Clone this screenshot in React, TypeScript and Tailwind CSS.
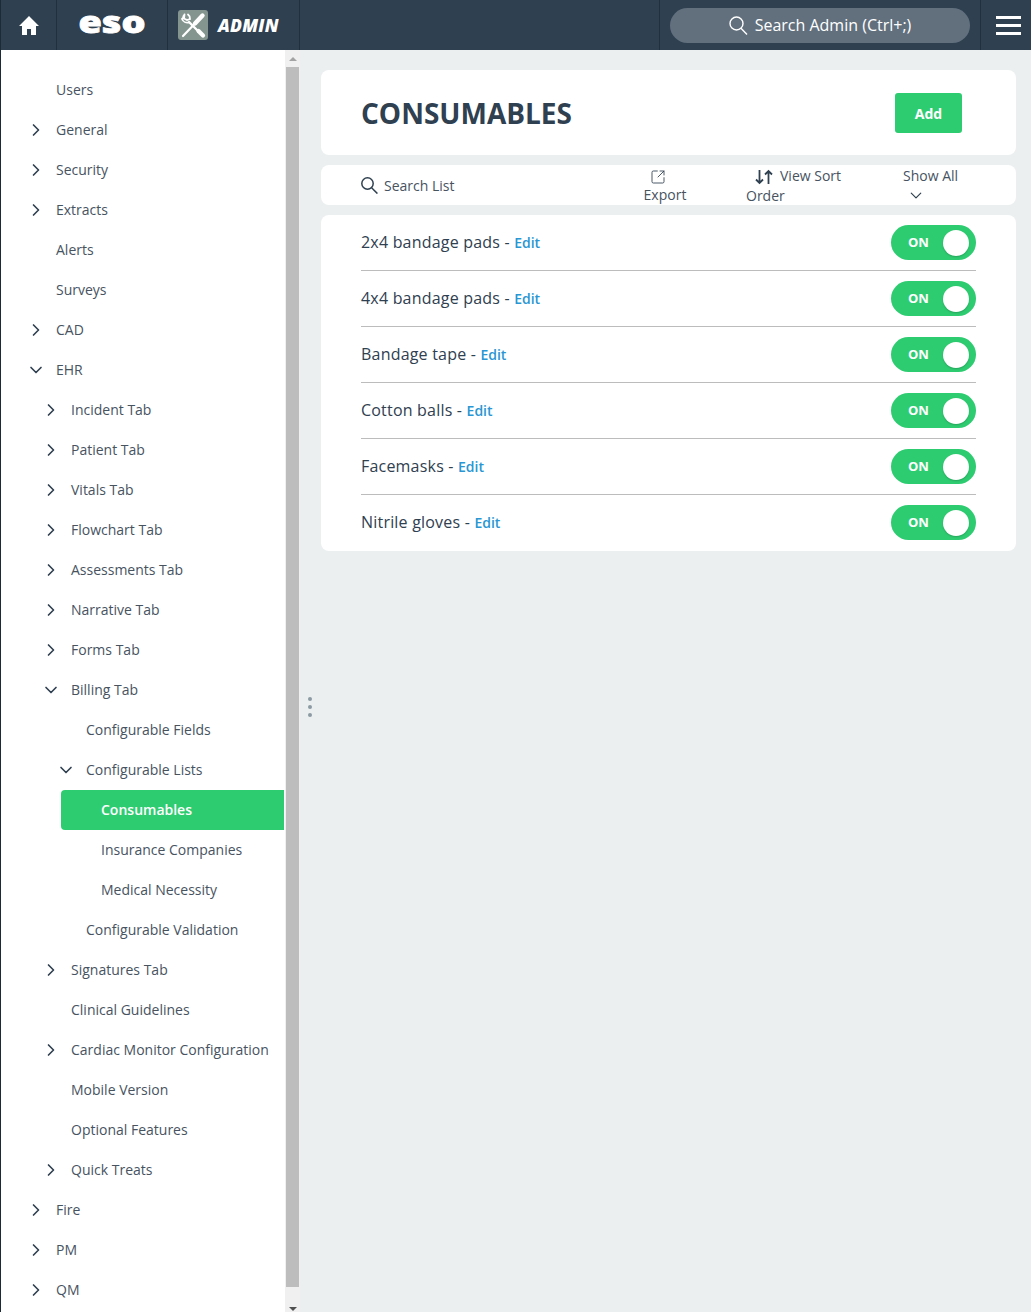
import React from "react";
import { ChevronRight, ChevronDown, SquareArrowOutUpRight } from "lucide-react";

type Row = { t: string; l: number; c?: "r" | "d"; a?: boolean };
const rows: Row[] = [
  { t: "Users", l: 0 },
  { t: "General", l: 0, c: "r" },
  { t: "Security", l: 0, c: "r" },
  { t: "Extracts", l: 0, c: "r" },
  { t: "Alerts", l: 0 },
  { t: "Surveys", l: 0 },
  { t: "CAD", l: 0, c: "r" },
  { t: "EHR", l: 0, c: "d" },
  { t: "Incident Tab", l: 1, c: "r" },
  { t: "Patient Tab", l: 1, c: "r" },
  { t: "Vitals Tab", l: 1, c: "r" },
  { t: "Flowchart Tab", l: 1, c: "r" },
  { t: "Assessments Tab", l: 1, c: "r" },
  { t: "Narrative Tab", l: 1, c: "r" },
  { t: "Forms Tab", l: 1, c: "r" },
  { t: "Billing Tab", l: 1, c: "d" },
  { t: "Configurable Fields", l: 2 },
  { t: "Configurable Lists", l: 2, c: "d" },
  { t: "Consumables", l: 3, a: true },
  { t: "Insurance Companies", l: 3 },
  { t: "Medical Necessity", l: 3 },
  { t: "Configurable Validation", l: 2 },
  { t: "Signatures Tab", l: 1, c: "r" },
  { t: "Clinical Guidelines", l: 1 },
  { t: "Cardiac Monitor Configuration", l: 1, c: "r" },
  { t: "Mobile Version", l: 1 },
  { t: "Optional Features", l: 1 },
  { t: "Quick Treats", l: 1, c: "r" },
  { t: "Fire", l: 0, c: "r" },
  { t: "PM", l: 0, c: "r" },
  { t: "QM", l: 0, c: "r" },
];
const items = ["2x4 bandage pads", "4x4 bandage pads", "Bandage tape", "Cotton balls", "Facemasks", "Nitrile gloves"];
const pad = ["pl-[55px]", "pl-[70px]", "pl-[85px]", "pl-[100px]"];
const chevLeft = ["left-[25px]", "left-[40px]", "left-[55px]", "left-[70px]"];

function NavRow({ r }: { r: Row }) {
  return (
    <div className={`relative h-10 flex items-center text-[14px] pb-[1px] ${pad[r.l]} ${r.a ? "" : "text-[#47535f]"}`}>
      {r.a && <div className="absolute left-[60px] right-[1px] top-0 bottom-0 bg-[#2ecc71] rounded-l-[4px]" />}
      {r.c === "r" && <ChevronRight className={`absolute ${chevLeft[r.l]} top-[10px] text-[#2f3f50]`} size={20} strokeWidth={2} />}
      {r.c === "d" && <ChevronDown className={`absolute ${chevLeft[r.l]} top-[10px] text-[#2f3f50]`} size={20} strokeWidth={2} />}
      <span className={r.a ? "relative font-semibold text-white" : "relative"}>{r.t}</span>
    </div>
  );
}

function Cell({ className, children }: { className: string; children: React.ReactNode }) {
  return <div className={`h-[50px] flex items-center justify-center border-r border-[#22303e] ${className}`}>{children}</div>;
}

export default function App() {
  return (
    <div className="w-[1031px] h-[1312px] overflow-hidden flex flex-col bg-[#ebeff0] font-['Open_Sans',sans-serif]">
      <header className="h-[50px] shrink-0 flex bg-[#2f4050] border-l border-[#1e2a36]">
        <Cell className="w-[56px]">
          <svg width="20" height="19" viewBox="0 0 20 19" fill="white" className="ml-[1px]">
            <path d="M10 0 L20 10 L17 10 L17 19 L12 19 L12 13 L8 13 L8 19 L3 19 L3 10 L0 10 Z" />
          </svg>
        </Cell>
        <Cell className="w-[111px]">
          <svg width="70" height="24" viewBox="0 0 70 24" fill="white" className="overflow-visible">
            <text x="35" y="20" textAnchor="middle" fontFamily="'Open Sans', sans-serif" fontWeight="800" fontSize="30" textLength="67" lengthAdjust="spacingAndGlyphs" stroke="white" strokeWidth="0.8">eso</text>
          </svg>
        </Cell>
        <Cell className="w-[132px] gap-[10px] justify-start">
          <div className="ml-[10px] w-[30px] h-[30px] rounded-[3px] bg-[#84958f]">
            <svg width="30" height="30" viewBox="0 0 30 30" fill="none" stroke="white" strokeLinecap="round">
              <path d="M24.5 5.5 L17 13.5" strokeWidth="4.4" />
              <path d="M17 13.5 L5 26" strokeWidth="2.2" />
              <path d="M11 12 L20 21" strokeWidth="2.4" />
              <path d="M20.5 21 L25 25.5" strokeWidth="4.2" />
              <path d="M6.5 4.5 L6 8.5 L9 10 L12 9 A5 5 0 0 0 10 4.5 M6.5 4.5 A6 6 0 0 0 5 8 L4 9 A6 6 0 0 0 11 12.5" strokeWidth="1.8" />
            </svg>
          </div>
          <span className="text-white italic font-extrabold text-[17.5px] tracking-[0.2px]">ADMIN</span>
        </Cell>
        <div className="flex-1" />
        <div className="w-[322px] h-[50px] flex items-center justify-center border-x border-[#22303e]">
          <div className="w-[300px] h-[35px] rounded-full bg-[#62707e] flex items-center justify-center gap-[7px] text-white text-[16px]">
            <svg width="19" height="19" viewBox="0 0 19 19" fill="none" stroke="white" strokeWidth="1.4">
              <circle cx="7.5" cy="7.5" r="6.5" />
              <path d="M12 12.2 L18 18.4" />
            </svg>
            <span>Search Admin (Ctrl+;)</span>
          </div>
        </div>
        <div className="w-[50px] flex flex-col items-center justify-center gap-[5px] pl-[5px]">
          <div className="w-[25px] h-[3px] bg-white" />
          <div className="w-[25px] h-[3px] bg-white" />
          <div className="w-[25px] h-[3px] bg-white" />
        </div>
      </header>
      <div className="flex-1 flex min-h-0">
        <aside className="w-[285px] shrink-0 bg-white border-l border-[#1e2a36] pt-[20px] overflow-hidden">
          {rows.map((r) => <NavRow key={r.t} r={r} />)}
        </aside>
        <div className="w-[15px] shrink-0 bg-[#f0f0f0] flex flex-col items-center">
          <div className="h-[17px] flex items-center justify-center">
            <div className="w-0 h-0 border-x-[4px] border-x-transparent border-b-[4px] border-b-[#a3a3a3]" />
          </div>
          <div className="w-[13px] h-[1220px] bg-[#bdbdbd]" />
          <div className="flex-1 flex items-end justify-center pb-[1px]">
            <div className="w-0 h-0 border-x-[4px] border-x-transparent border-t-[4px] border-t-[#505050]" />
          </div>
        </div>
        <div className="w-[21px] shrink-0 relative">
          <div className="absolute left-[8px] top-[647px] flex flex-col gap-[4px]">
            <div className="w-[4px] h-[4px] rounded-full bg-[#8c9aa3]" />
            <div className="w-[4px] h-[4px] rounded-full bg-[#8c9aa3]" />
            <div className="w-[4px] h-[4px] rounded-full bg-[#8c9aa3]" />
          </div>
        </div>
        <main className="w-[695px] pt-[20px] flex flex-col gap-[10px]">
          <section className="h-[85px] bg-white rounded-[8px] flex items-center justify-between pl-[40px] pr-[54px]">
            <h1 className="text-[28px] font-bold text-[#2f4050]">CONSUMABLES</h1>
            <button className="w-[67px] h-[40px] mt-[1px] rounded-[3px] bg-[#2ecc71] text-white font-bold text-[14px]">Add</button>
          </section>
          <section className="h-[40px] bg-white rounded-[8px] flex text-[14px] text-[#47535f] leading-[20px]">
            <div className="pl-[40px] w-[320px] flex items-center gap-[6px] pt-[1px]">
              <svg width="17" height="17" viewBox="0 0 17 17" fill="none" stroke="#2f4050" strokeWidth="1.5">
                <circle cx="6.5" cy="6.5" r="5.7" />
                <path d="M10.6 10.8 L16.4 16.6" />
              </svg>
              <span>Search List</span>
            </div>
            <div className="w-[70px] flex flex-col items-center -ml-[11px] pt-[4px]">
              <SquareArrowOutUpRight size={16} strokeWidth={1.3} className="text-[#2f4050] -ml-[14px]" />
              <span className="leading-[18px] mt-[1px]">Export</span>
            </div>
            <div className="w-[110px] ml-[46px] leading-[19px] pt-[1px]">
              <div className="flex items-center">
                <svg width="18" height="16" viewBox="0 0 18 16" fill="none" stroke="#2f4050" strokeWidth="1.8" className="ml-[9px] mr-[7px] mt-[3px]">
                  <path d="M4.5 1 V14 M1 10.5 L4.5 14 L8 10.5" />
                  <path d="M13.5 15 V2 M10 5.5 L13.5 2 L17 5.5" />
                </svg>
                <span>View Sort</span>
              </div>
              <div className="leading-[20px] mt-[1px]">Order</div>
            </div>
            <div className="ml-[47px] w-[56px] flex flex-col items-start pt-[1px]">
              <span className="leading-[20px] whitespace-nowrap">Show All</span>
              <ChevronDown size={20} strokeWidth={1.5} className="text-[#2f4050] ml-[3px]" />
            </div>
          </section>
          <section className="h-[336px] bg-white rounded-[8px] px-[40px]">
            {items.map((t, i) => (
              <div key={t} className={`flex items-center justify-between h-[56px] border-b ${i < 5 ? "border-[#bcbcbc]" : "border-transparent"}`}>
                <div className="text-[16px] font-medium text-[#2f4050] pb-[1px] tracking-[0.2px]">
                  {t} - <a className="text-[14px] font-semibold text-[#2a96d3] tracking-normal">Edit</a>
                </div>
                <div className="w-[85px] h-[35px] rounded-full bg-[#2ecc71] flex items-center justify-between pl-[17px] pr-[7px]">
                  <span className="text-white text-[13px] font-bold tracking-normal">ON</span>
                  <div className="w-[26px] h-[26px] rounded-full bg-white shadow-[0_1px_2px_rgba(0,0,0,0.2)]" />
                </div>
              </div>
            ))}
          </section>
        </main>
      </div>
    </div>
  );
}
